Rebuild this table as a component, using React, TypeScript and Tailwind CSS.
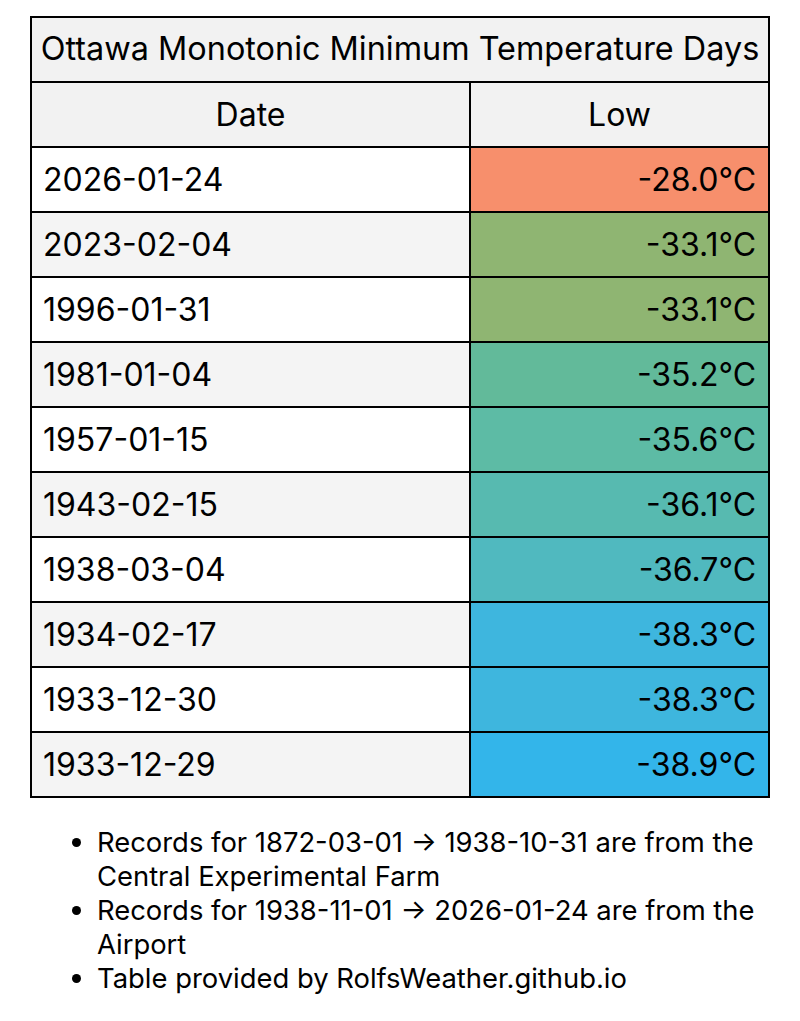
const rows = [
  { date: "2026-01-24", low: "-28.0°C", bg: "bg-[#f78f6c]" },
  { date: "2023-02-04", low: "-33.1°C", bg: "bg-[#8fb572]" },
  { date: "1996-01-31", low: "-33.1°C", bg: "bg-[#8fb572]" },
  { date: "1981-01-04", low: "-35.2°C", bg: "bg-[#62ba9a]" },
  { date: "1957-01-15", low: "-35.6°C", bg: "bg-[#5dbba5]" },
  { date: "1943-02-15", low: "-36.1°C", bg: "bg-[#57bab0]" },
  { date: "1938-03-04", low: "-36.7°C", bg: "bg-[#50b9bf]" },
  { date: "1934-02-17", low: "-38.3°C", bg: "bg-[#3eb6de]" },
  { date: "1933-12-30", low: "-38.3°C", bg: "bg-[#3eb6de]" },
  { date: "1933-12-29", low: "-38.9°C", bg: "bg-[#33b5ea]" },
];

const App = () => {
  return (
    <div className="min-h-[1021px] bg-white text-black font-['Inter',sans-serif] pt-[16px] px-[30px]">
      <table className="w-[740px] border-collapse border-2 border-black text-[32px]">
        <thead>
          <tr className="h-[65px] bg-[#f2f2f2]">
            <th colSpan={2} className="border-2 border-black font-normal text-center px-1 text-[32.4px]">
              Ottawa Monotonic Minimum Temperature Days
            </th>
          </tr>
          <tr className="h-[65px] bg-[#f2f2f2]">
            <th className="border-2 border-black font-normal text-center w-[439px]">Date</th>
            <th className="border-2 border-black font-normal text-center">Low</th>
          </tr>
        </thead>
        <tbody>
          {rows.map((r, i) => (
            <tr key={r.date} className={`h-[65px] ${i % 2 === 1 ? "bg-[#f4f4f4]" : "bg-white"}`}>
              <td className="border-2 border-black pl-[11px] pr-3 text-left">{r.date}</td>
              <td className={`border-2 border-black px-3 text-right ${r.bg}`}>{r.low}</td>
            </tr>
          ))}
        </tbody>
      </table>

      <ul className="list-disc pl-[67px] mt-[27px] text-[27.4px] leading-[34px]">
        <li>Records for 1872-03-01 → 1938-10-31 are from the Central Experimental Farm</li>
        <li>Records for 1938-11-01 → 2026-01-24 are from the Airport</li>
        <li>Table provided by RolfsWeather.github.io</li>
      </ul>
    </div>
  );
};

export default App;
